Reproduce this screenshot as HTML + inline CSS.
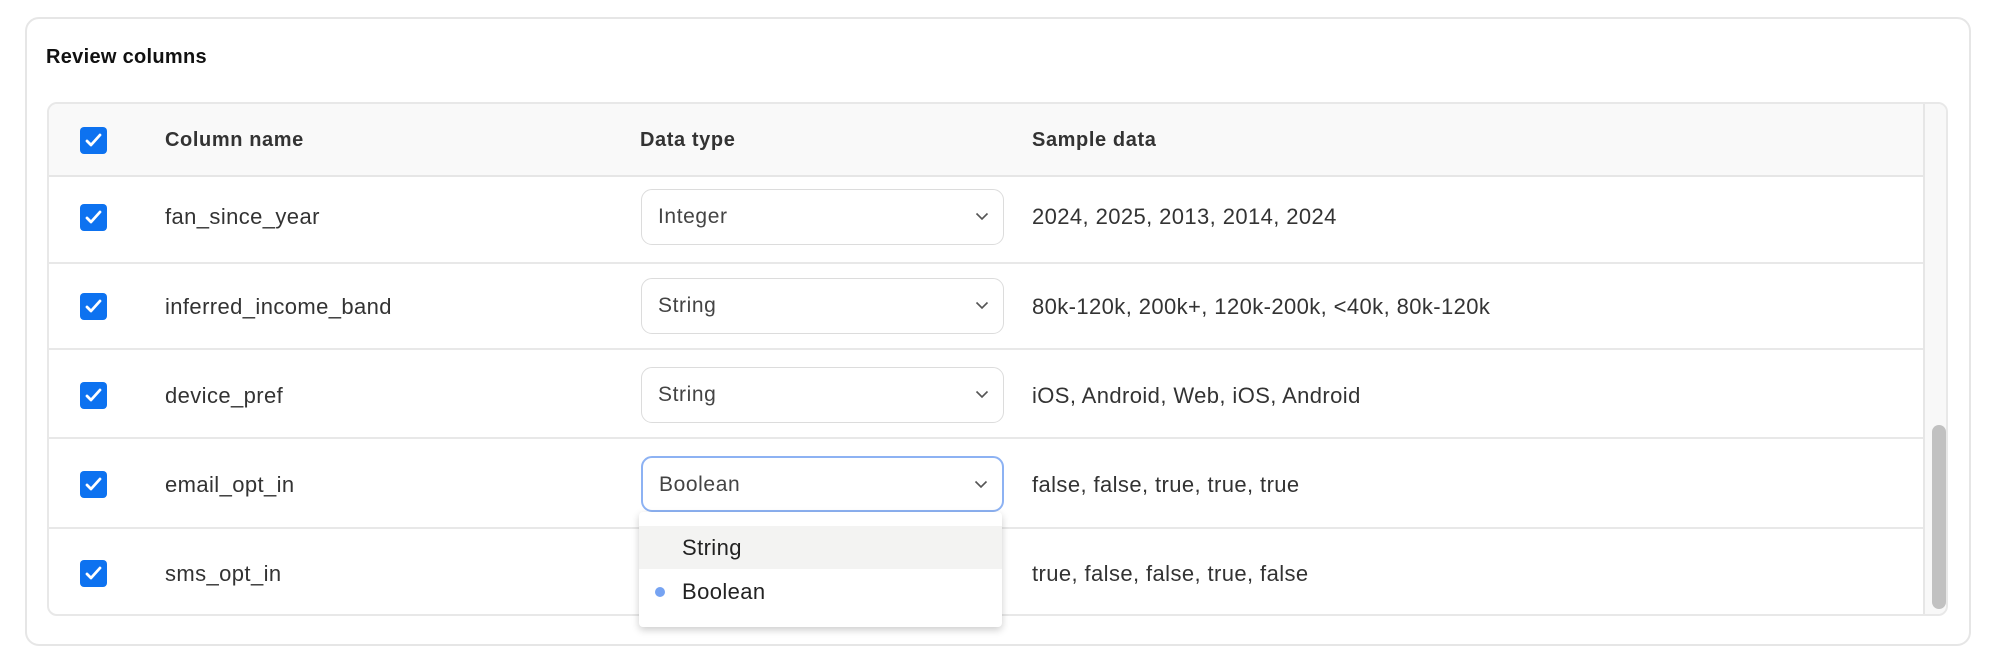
<!DOCTYPE html>
<html><head><meta charset="utf-8"><style>
*{box-sizing:border-box;margin:0;padding:0}
body{width:1999px;height:668px;background:#fff;font-family:"Liberation Sans",sans-serif;color:#333;position:relative;overflow:hidden}
.card{position:absolute;left:25px;top:17px;width:1946px;height:629px;border:2px solid #e6e6e6;border-radius:14px}
.title{position:absolute;left:46px;top:46px;font-size:20px;font-weight:bold;color:#111;letter-spacing:0.3px}
.tbl{position:absolute;left:47px;top:102px;width:1901px;height:514px;border:2px solid #e8e8e8;border-radius:10px;overflow:hidden}
.hdr{position:absolute;left:0;top:0;width:100%;height:73px;background:#f9f9f9;border-bottom:2px solid #e6e6e6}
.line{position:absolute;left:0;width:1874px;height:2px;background:#e8e8e8}
.cb{position:absolute;left:31px;width:27px;height:27px;background:#0d72f0;border-radius:4px}
.cb svg{position:absolute;left:4px;top:4px}
.t{position:absolute;font-size:22px;line-height:24px;color:#333;white-space:nowrap;letter-spacing:0.4px}
.h{position:absolute;font-size:20px;font-weight:bold;color:#333;line-height:24px;letter-spacing:0.6px}
.sel{position:absolute;left:592px;width:363px;height:56px;border:1.5px solid #dcdcdc;border-radius:11px;background:#fff}
.sel span{position:absolute;left:16px;top:15px;font-size:21px;color:#444;letter-spacing:0.6px}
.sel svg{position:absolute;right:14px;top:22px}
.sb{position:absolute;left:1874px;top:0;width:27px;height:100%;background:#f8f8f8;border-left:2px solid #e6e6e6}
.thumb{position:absolute;left:7px;top:321px;width:14px;height:184px;background:#c1c1c1;border-radius:7px}
.dd{position:absolute;left:639px;top:512px;width:363px;height:115px;background:#fff;border-radius:4px;box-shadow:0 3px 8px rgba(0,0,0,.2)}
</style></head><body>
<div class="card"></div>
<div class="title">Review columns</div>
<div class="tbl">
<div class="hdr"></div>
<div class="line" style="top:158px"></div>
<div class="line" style="top:244px"></div>
<div class="line" style="top:333px"></div>
<div class="line" style="top:423px"></div>
<div class="sb"><div class="thumb"></div></div>

<div class="cb" style="top:23px"><svg width="19" height="19" viewBox="0 0 19 19"><path d="M3 10l4 4 9-10" stroke="#fff" stroke-width="2.8" fill="none" stroke-linecap="round" stroke-linejoin="round"/></svg></div>
<div class="h" style="left:116px;top:24px">Column name</div>
<div class="h" style="left:591px;top:24px">Data type</div>
<div class="h" style="left:983px;top:24px">Sample data</div>

<div class="cb" style="top:100px"><svg width="19" height="19" viewBox="0 0 19 19"><path d="M3 10l4 4 9-10" stroke="#fff" stroke-width="2.8" fill="none" stroke-linecap="round" stroke-linejoin="round"/></svg></div>
<div class="t" style="left:116px;top:101px">fan_since_year</div>
<div class="sel" style="top:85px"><span>Integer</span><svg width="14" height="9" viewBox="0 0 14 9"><path d="M1.5 1.5l5.5 5.5 5.5-5.5" stroke="#555" stroke-width="1.6" fill="none"/></svg></div>
<div class="t" style="left:983px;top:101px">2024, 2025, 2013, 2014, 2024</div>

<div class="cb" style="top:189px"><svg width="19" height="19" viewBox="0 0 19 19"><path d="M3 10l4 4 9-10" stroke="#fff" stroke-width="2.8" fill="none" stroke-linecap="round" stroke-linejoin="round"/></svg></div>
<div class="t" style="left:116px;top:191px">inferred_income_band</div>
<div class="sel" style="top:174px"><span>String</span><svg width="14" height="9" viewBox="0 0 14 9"><path d="M1.5 1.5l5.5 5.5 5.5-5.5" stroke="#555" stroke-width="1.6" fill="none"/></svg></div>
<div class="t" style="left:983px;top:191px">80k-120k, 200k+, 120k-200k, &lt;40k, 80k-120k</div>

<div class="cb" style="top:278px"><svg width="19" height="19" viewBox="0 0 19 19"><path d="M3 10l4 4 9-10" stroke="#fff" stroke-width="2.8" fill="none" stroke-linecap="round" stroke-linejoin="round"/></svg></div>
<div class="t" style="left:116px;top:280px">device_pref</div>
<div class="sel" style="top:263px"><span>String</span><svg width="14" height="9" viewBox="0 0 14 9"><path d="M1.5 1.5l5.5 5.5 5.5-5.5" stroke="#555" stroke-width="1.6" fill="none"/></svg></div>
<div class="t" style="left:983px;top:280px">iOS, Android, Web, iOS, Android</div>

<div class="cb" style="top:367px"><svg width="19" height="19" viewBox="0 0 19 19"><path d="M3 10l4 4 9-10" stroke="#fff" stroke-width="2.8" fill="none" stroke-linecap="round" stroke-linejoin="round"/></svg></div>
<div class="t" style="left:116px;top:369px">email_opt_in</div>
<div class="sel" style="top:352px;border:2px solid #8db2f3"><span>Boolean</span><svg width="14" height="9" viewBox="0 0 14 9"><path d="M1.5 1.5l5.5 5.5 5.5-5.5" stroke="#555" stroke-width="1.6" fill="none"/></svg></div>
<div class="t" style="left:983px;top:369px">false, false, true, true, true</div>

<div class="cb" style="top:456px"><svg width="19" height="19" viewBox="0 0 19 19"><path d="M3 10l4 4 9-10" stroke="#fff" stroke-width="2.8" fill="none" stroke-linecap="round" stroke-linejoin="round"/></svg></div>
<div class="t" style="left:116px;top:458px">sms_opt_in</div>
<div class="t" style="left:983px;top:458px">true, false, false, true, false</div>
</div>

<div class="dd">
<div style="position:absolute;left:0;top:14px;width:100%;height:43px;background:#f3f3f2"></div>
<div class="t" style="left:43px;top:24px;color:#222">String</div>
<div style="position:absolute;left:16px;top:75px;width:10px;height:10px;border-radius:50%;background:#76a3f2"></div>
<div class="t" style="left:43px;top:68px;color:#222">Boolean</div>
</div>
</body></html>
